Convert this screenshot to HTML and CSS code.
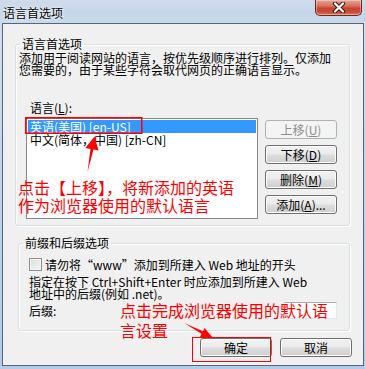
FILE: index.html
```html
<!DOCTYPE html>
<html lang="zh-CN">
<head>
    <meta charset="UTF-8">
    <title>语言首选项</title>
    <link rel="stylesheet" href="styles.css">
</head>
<body>
    <div class="window">
        <div class="title-bar">
            <span class="title">语言首选项</span>
            <button class="close-btn" title="关闭">
                <svg width="14" height="11" viewBox="0 0 14 11">
                    <path d="M3 1.5 L11 9.5 M11 1.5 L3 9.5" stroke="#3b1a16" stroke-width="4.2" stroke-linecap="round"/>
                    <path d="M3 1.5 L11 9.5 M11 1.5 L3 9.5" stroke="#ffffff" stroke-width="2.2" stroke-linecap="round"/>
                </svg>
            </button>
        </div>

        <div class="client">
            <fieldset class="group group-lang">
                <legend>语言首选项</legend>
                <p class="desc">添加用于阅读网站的语言，按优先级顺序进行排列。仅添加<br>您需要的，由于某些字符会取代网页的正确语言显示。</p>
                <div class="lang-label">语言(<u>L</u>):</div>
                <div class="lang-row">
                    <ul class="lang-list">
                        <li class="selected">英语(美国) [en-US]</li>
                        <li>中文(简体，中国) [zh-CN]</li>
                    </ul>
                    <div class="side-buttons">
                        <button class="btn" disabled>上移(<u>U</u>)</button>
                        <button class="btn">下移(<u>D</u>)</button>
                        <button class="btn">删除(<u>M</u>)</button>
                        <button class="btn">添加(<u>A</u>)...</button>
                    </div>
                </div>
            </fieldset>

            <fieldset class="group group-suffix">
                <legend>前缀和后缀选项</legend>
                <label class="check-row"><span class="checkbox"></span>请勿将“www”添加到所建入 Web 地址的开头</label>
                <p class="hint">指定在按下 Ctrl+Shift+Enter 时应添加到所建入 Web<br>地址中的后缀(例如 .net)。</p>
                <div class="suffix-row">
                    <span>后缀:</span>
                    <input class="suffix-input" type="text">
                </div>
            </fieldset>

            <div class="dialog-buttons">
                <button class="btn">确定</button>
                <button class="btn">取消</button>
            </div>
        </div>

        <!-- red annotations on top of the dialog -->
        <div class="note note-move">点击【上移】，将新添加的英语<br>作为浏览器使用的默认语言</div>
        <div class="note note-ok">点击完成浏览器使用的默认语<br>言设置</div>
        <svg class="marks" width="365" height="369" viewBox="0 0 365 369">
            <rect x="25.75" y="117.75" width="116" height="15.5" fill="none" stroke="#ff0000" stroke-width="1.5"/>
            <rect x="192.5" y="337.5" width="78" height="24" fill="none" stroke="#ff0000" stroke-width="1"/>
            <polygon points="87.5,172 90.5,149 85.4,148 94.5,136.5 98.6,150.6 93.5,149.6" fill="#ff0000"/>
            <polygon points="184,323 203,331.2 204.6,328 213,338 200,337 201.6,333.8" fill="#ff0000"/>
        </svg>
    </div>
</body>
</html>
```

FILE: styles.css
```css
* {
    margin: 0;
    padding: 0;
    box-sizing: border-box;
}

body {
    font-family: "Noto Sans CJK SC", "Liberation Sans", sans-serif;
    font-size: 12px;
    color: #000;
    background: #b9cfe8;
}

.window {
    position: relative;
    width: 365px;
    height: 369px;
    display: flex;
    flex-direction: column;
    background: linear-gradient(180deg, #d2e0f0 0%, #c3d6eb 40%, #b3cbe6 100%);
    overflow: hidden;
}

/* Title bar */
.title-bar {
    height: 23px;
    display: flex;
    justify-content: space-between;
    align-items: flex-start;
    padding-left: 3px;
    padding-right: 3px;
    background: linear-gradient(180deg, #cfdcec 0%, #c6d6e9 50%, #c9d9ec 100%);
}

.title {
    line-height: 26px;
    text-shadow: 0 0 4px #fff, 0 0 2px #fff;
}

.close-btn {
    width: 47px;
    height: 16px;
    border: 1px solid #6e2a21;
    border-top: none;
    border-radius: 0 0 5px 5px;
    background: linear-gradient(180deg, #e5a497 0%, #d8705e 40%, #c7452e 55%, #c94a32 80%, #dc7a5f 100%);
    box-shadow: inset 0 0 0 1px rgba(255, 255, 255, 0.35);
    display: flex;
    justify-content: center;
    align-items: center;
    cursor: pointer;
}

/* Client area */
.client {
    flex: 1;
    margin: 0 1px 3px 2px;
    border: 1px solid #55657a;
    background: #f0f0f0;
    display: flex;
    flex-direction: column;
}

.group {
    border: 1px solid #d5dfe5;
    border-radius: 3px;
    box-shadow: inset 1px 1px 0 #fff, 1px 1px 0 #fff;
    min-width: 0;
}

.group legend {
    margin-left: 4px;
    padding: 0 2px;
    line-height: 14px;
}

.group-lang {
    margin: 13px 13px 0 12px;
    padding: 0 0 6px 0;
}

.desc {
    margin-top: 1px;
    padding-left: 3px;
    line-height: 12px;
    white-space: nowrap;
}

.lang-label {
    margin-top: 25px;
    padding-left: 14px;
    line-height: 13px;
}

.lang-label u,
.btn u {
    text-decoration: underline;
}

.lang-row {
    display: flex;
    gap: 7px;
    margin-top: 4px;
    padding-left: 10px;
}

.lang-list {
    list-style: none;
    width: 232px;
    height: 101px;
    padding: 1px;
    border: 1px solid #828790;
    background: #fff;
}

.lang-list li {
    height: 13px;
    line-height: 13px;
    padding-left: 2px;
    white-space: nowrap;
}

.lang-list li.selected {
    background: #3399ff;
    color: #fff;
}

.side-buttons {
    display: flex;
    flex-direction: column;
    gap: 6px;
    margin-top: 2px;
}

/* Win7 push button */
.btn {
    width: 72px;
    height: 19px;
    font-family: inherit;
    font-size: 12px;
    line-height: 15px;
    color: #000;
    border: 1px solid #707070;
    border-radius: 3px;
    background: linear-gradient(180deg, #f2f2f2 0%, #ebebeb 48%, #dddddd 52%, #cfcfcf 100%);
    box-shadow: inset 0 0 0 1px #fcfcfc;
    cursor: pointer;
}

.btn:disabled {
    color: #8d8d8d;
    border-color: #adb2b5;
    background: #f4f4f4;
    box-shadow: none;
    cursor: default;
}

.group-suffix {
    margin: 10px 13px 0 15px;
    padding: 0 0 11px 0;
}

.check-row {
    display: flex;
    align-items: center;
    gap: 3px;
    margin-top: 8px;
    padding-left: 10px;
    height: 13px;
    line-height: 13px;
    white-space: nowrap;
}

.checkbox {
    width: 13px;
    height: 13px;
    border: 1px solid #8e8f8f;
    background: linear-gradient(135deg, #dcdcdc 0%, #f6f6f6 100%);
    box-shadow: inset 0 0 0 1px #f4f4f4;
    flex-shrink: 0;
}

.hint {
    margin-top: 5px;
    padding-left: 10px;
    line-height: 12px;
    white-space: nowrap;
}

.suffix-row {
    display: flex;
    justify-content: space-between;
    align-items: center;
    margin-top: 2px;
    padding: 0 12px 0 10px;
    height: 17px;
}

.suffix-input {
    width: 53px;
    height: 17px;
    border: 1px solid #e3e9ef;
    border-top-color: #abadb3;
    background: #fff;
    outline: none;
}

.dialog-buttons {
    display: flex;
    justify-content: flex-end;
    gap: 8px;
    margin-top: 7px;
    padding-right: 11px;
}

/* Annotations */
.note {
    position: absolute;
    color: #ff0000;
    font-size: 16px;
    white-space: nowrap;
}

.note-move {
    left: 18px;
    top: 178px;
    line-height: 18px;
}

.note-ok {
    left: 120px;
    top: 300px;
    line-height: 20px;
}

.marks {
    position: absolute;
    left: 0;
    top: 0;
    pointer-events: none;
}
```
